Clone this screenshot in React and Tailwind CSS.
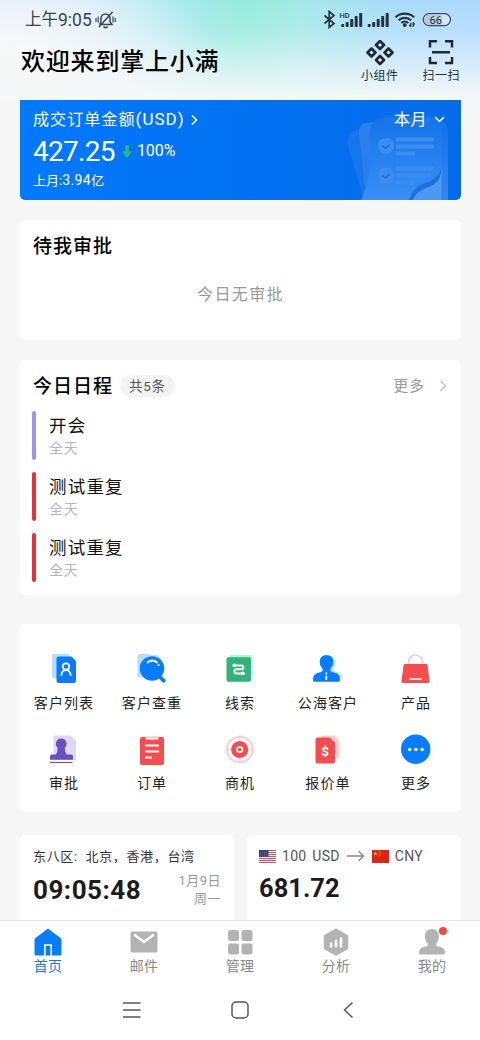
import React from "react";

const schedules = [
  { id: 1, title: "开会", time: "全天", color: "bg-[#9799ea]" },
  { id: 2, title: "测试重复", time: "全天", color: "bg-[#e2343a]" },
  { id: 3, title: "测试重复", time: "全天", color: "bg-[#e2343a]" },
];

const StatusIcons = () => (
  <svg width="130" height="20" viewBox="322 10 130 20" fill="none">
    {/* bluetooth */}
    <path
      d="M324.5 15.5 334 23.5 329.2 27.5V11.5L334 15.5 324.5 23.5"
      stroke="#26333b"
      strokeWidth="1.7"
    />
    <text x="339.5" y="17.5" fontSize="7.5" fontWeight="500" fill="#26333b">
      HD
    </text>
    {/* signal bars */}
    <g fill="#26333b">
      <rect x="341.2" y="24" width="3" height="3" rx=".8" />
      <rect x="345.7" y="22" width="3" height="5" rx=".8" />
      <rect x="350.2" y="19" width="3" height="8" rx=".8" />
      <rect x="354.7" y="16" width="3" height="11" rx=".8" />
      <rect x="359.2" y="13" width="3" height="14" rx=".8" />
      <rect x="367.7" y="24" width="3" height="3" rx=".8" />
      <rect x="372.2" y="22" width="3" height="5" rx=".8" />
      <rect x="376.7" y="19" width="3" height="8" rx=".8" />
      <rect x="381.2" y="16" width="3" height="11" rx=".8" />
      <rect x="385.7" y="13" width="3" height="14" rx=".8" />
      <circle cx="404.8" cy="25" r="1.9" />
      <path d="M411 22.5v4.5l-2-1.6M413 27v-4.5l2 1.6" stroke="#26333b" strokeWidth=".8" />
    </g>
    <g stroke="#26333b" strokeWidth="2.1">
      <path d="M395.5 17.2c5.2-4.8 13.4-4.8 18.6 0" />
      <path d="M398.5 20.3c3.5-3.2 9.1-3.2 12.600 0" />
      <path d="M401.3 23c2-1.800 5-1.800 7 0" />
    </g>
    <rect x="423.3" y="13.600" width="27.200" height="12" rx="6" fill="#d3e9fd" stroke="#3c4a55" strokeWidth="1.300" />
    <path d="M429.300 14.300h12.500v10.600h-12.500a5.300 5.300 0 0 1 0-10.600z" fill="#b3cbdf" />
    <text x="429.500" y="23.500" fontSize="11" fill="#26333b">
      66
    </text>
  </svg>
);

const MuteIcon = () => (
  <svg width="22" height="18" viewBox="0 0 22 18" fill="none" stroke="#3c464e" strokeWidth="1.500">
    <path d="M4.500 13.500h12.500l-1.900-2.500V7.500a4.600 4.600 0 0 0-9.200 0V11l-1.400 2.500M17.500 1 4 16" />
    <path d="M8.500 15.500a2.500 2.500 0 0 0 4.200 0" />
    <path d="M1 7v4M3.200 5.500v6M18 5.500v6M20.200 7v4" strokeWidth="1.200" />
  </svg>
);

const Header = () => (
  <header className="h-[100px] shrink-0 bg-[linear-gradient(to_bottom,transparent_0%,rgba(246,248,248,0.15)_30%,rgba(246,248,248,0.7)_75%,#f5f8f8_100%),radial-gradient(ellipse_235px_150px_at_0px_100px,#f7f9f9_35%,transparent_100%),linear-gradient(97deg,#dce9fd_0%,#cae9fb_22%,#9feae6_42%,#97ecdc_50%,#a3e9e8_62%,#a9dcfb_80%,#add9ff_100%)]">
    <div className="flex h-10 items-center justify-between pl-[25px] pr-7 text-[#39434a]">
      <div className="flex items-center text-[17.5px]">
        <span className="text-[16.5px]">上午</span>
        <span className="mr-[3px]">9:05</span>
        <MuteIcon />
      </div>
      <StatusIcons />
    </div>
    <div className="flex justify-between pl-[21px] pr-5">
      <h1 className="mt-1 text-[24px] leading-9 font-medium tracking-[0.8px] text-black">
        欢迎来到掌上小满
      </h1>
      <div className="flex gap-6 text-[12px] leading-4 tracking-[0.5px] text-[#263036]">
        <div className="flex flex-col items-center">
          <svg width="28" height="28" viewBox="0 0 28 28" fill="none" stroke="#20292d" strokeWidth="2.600" strokeLinejoin="round">
            <path d="m14 1 4 4-4 4-4-4zM5.500 8.500l4 4-4 4-4-4zM22.500 8.500l4 4-4 4-4-4zM14 16l4 4-4 4-4-4z" />
          </svg>
          <span>小组件</span>
        </div>
        <div className="flex flex-col items-center">
          <svg width="26" height="28" viewBox="0 0 26 28" fill="none" stroke="#20292d" strokeWidth="2.500">
            <path d="M2 7.500V1.300h7M17 1.300h7v6.200M24 17v6h-7M9 23H2v-6M4 12.200h18" />
          </svg>
          <span>扫一扫</span>
        </div>
      </div>
    </div>
  </header>
);

const OrderCard = () => (
  <section className="relative h-[100px] shrink-0 overflow-hidden rounded-b-[5px] bg-linear-to-r from-[#0379fc] via-[#0272f2] to-[#066bea] pt-2 pr-4 pl-[13px] text-white">
    <svg className="absolute right-0 bottom-0" width="120" height="100" viewBox="341 100 120 100">
      <defs>
        <linearGradient id="page" x1="0" y1="0" x2="0" y2="1">
          <stop offset="0" stopColor="#1374e9" />
          <stop offset="1" stopColor="#3a8ff5" />
        </linearGradient>
        <linearGradient id="edge" x1="0" y1="0" x2="0" y2="1">
          <stop offset="0" stopColor="#1172e8" />
          <stop offset="1" stopColor="#3388ee" />
        </linearGradient>
      </defs>
      <path d="M363 197 348 145q-2-9 4-13l12-5 20-3v76z" fill="#1677ec" />
      <path d="M364 186q-1-22-5-52-1-10 7-11l25-3v80z" fill="#2880ec" />
      <path d="M430 120h8q10 2 10 12v68h-14z" fill="url(#edge)" />
      <path d="M361 200q13-30 9-66 0-16 12-16h48q12 0 12 14v38q-4 18-25 25l-5 5z" fill="url(#page)" />
      <path d="M384 116h46v9h-46z" fill="#2c7ff0" opacity=".35" />
      <path d="M410 200q5-10 15-13 15-4 16.500-18v31z" fill="#4c99f2" />
      <path d="M409 200q4-13 14-16 14-4 18.500-15-1 15-15.500 19-9 3-13 12z" fill="#1a71df" />
      <g fill="#3c8df0">
        <circle cx="386" cy="146" r="8" />
        <circle cx="386" cy="175.500" r="8" />
        <rect x="396" y="137.500" width="38" height="4" />
        <rect x="396" y="144.500" width="38" height="4" />
        <rect x="396" y="151.500" width="19" height="4" />
        <rect x="396" y="166.500" width="38" height="4" />
        <rect x="396" y="173.500" width="35" height="4" />
        <rect x="396" y="180.500" width="19" height="4" />
      </g>
      <path d="m382.500 146 3 2.500 4-4M382.500 175.500l3 2.500 4-4" fill="none" stroke="#1668d4" strokeWidth="1.200" />
    </svg>
    <div className="relative flex h-[23px] items-center justify-between text-[16px]">
      <div className="flex items-center">
        <span className="tracking-[1.100px]">成交订单金额</span>
        <span className="text-[17px] tracking-[1px]">(USD)</span>
        <svg className="ml-1.5" width="7" height="12" viewBox="0 0 7 12" fill="none" stroke="#fff" strokeWidth="1.500">
          <path d="m1 1.500 4.500 4.500L1 10.500" />
        </svg>
      </div>
      <div className="flex items-center gap-[7px] tracking-[0.500px]">
        本月
        <svg width="11" height="7" viewBox="0 0 11 7" fill="none" stroke="#fff" strokeWidth="1.500">
          <path d="m1 1 4.500 4.500L10 1" />
        </svg>
      </div>
    </div>
    <div className="relative flex h-10 items-center">
      <span className="pt-0.5 text-[28px] tracking-[-0.700px]">427.25</span>
      <svg className="ml-[7px]" width="10" height="13" viewBox="0 0 10 13" fill="#2eb57e">
        <path d="M3.200 0h3.600v6.500H10L5 13 0 6.500h3.200z" />
      </svg>
      <span className="ml-[5px] text-[16px]">100%</span>
    </div>
    <div className="relative text-[13px] leading-[18px]">
      上月:<span className="text-[14px] tracking-[0.400px]">3.94</span>亿
    </div>
  </section>
);

const ScheduleCard = () => (
  <section className="mt-5 h-[235px] shrink-0 rounded-[5px] bg-white pt-3 pr-3 pl-3">
    <div className="flex h-7 items-center">
      <h2 className="mt-0.5 ml-px text-[19px] font-medium tracking-[1px] text-black">今日日程</h2>
      <span className="ml-[7px] flex h-[22px] items-center rounded-full bg-[#f3f3f3] px-[9px] text-[13.500px] tracking-[0.700px] text-[#555]">
        共5条
      </span>
      <span className="ml-auto text-[15px] tracking-[0.900px] text-[#999]">更多</span>
      <svg className="mr-[2px] ml-[14px]" width="8" height="12" viewBox="0 0 8 12" fill="none" stroke="#bbb" strokeWidth="1.200">
        <path d="m1.500 1 5 5-5 5" />
      </svg>
    </div>
    <div className="mt-[10.500px] flex flex-col gap-3">
      {schedules.map((item) => (
        <div key={item.id} className="flex h-[49px]">
          <div className={`w-1 rounded-full ${item.color}`}></div>
          <div className="ml-[13px] flex flex-col">
            <span className="mt-[3px] text-[17.500px] leading-6 tracking-[1.200px] text-[#111]">{item.title}</span>
            <span className="text-[14px] leading-5 tracking-[0.800px] text-[#b5b5b5]">{item.time}</span>
          </div>
        </div>
      ))}
    </div>
  </section>
);

const features = [
  {
    name: "客户列表",
    icon: (
      <>
        <path d="M5 0h15v24H5a2 2 0 0 1-2-2V2a2 2 0 0 1 2-2z" fill="#b9ddfd" />
        <path d="M9.500 2.500h13L27 7v20a2 2 0 0 1-2 2H9.500a2 2 0 0 1-2-2V4.500a2 2 0 0 1 2-2z" fill="#087dfb" />
        <g fill="none" stroke="#fff" strokeWidth="1.800">
          <circle cx="17" cy="12.500" r="3.200" />
          <path d="M12.300 22c0-8 9.400-8 9.400 0" />
        </g>
      </>
    ),
  },
  {
    name: "客户查重",
    icon: (
      <>
        <path d="M2.500 0h10v23h-12V2a2 2 0 0 1 2-2z" fill="#b9ddfd" />
        <path d="M12 1h8l5 5v4H12z" fill="#b9ddfd" />
        <path d="m21 21 5.700 5.700" stroke="#087dfb" strokeWidth="3.800" strokeLinecap="round" />
        <circle cx="15" cy="14.500" r="12.200" fill="#087dfb" />
        <path d="M10.500 8.500q5-4 9.500 0" fill="none" stroke="#fff" strokeWidth="1.800" strokeLinecap="round" />
        <circle cx="21.500" cy="11" r="1" fill="#fff" />
      </>
    ),
  },
  {
    name: "线索",
    icon: (
      <>
        <rect x="4.500" y="1" width="23" height="23" rx="2" fill="#b5efd6" />
        <rect x="1.500" y="3.300" width="24.500" height="24.500" rx="2" fill="#31b37c" />
        <path d="M9 11.500h7.500a1.900 1.900 0 0 1 0 3.800h-5a2 2 0 0 0 0 4.200H18" fill="none" stroke="#fff" strokeWidth="1.900" />
        <circle cx="9.300" cy="11.300" r="1.900" fill="#fff" />
        <circle cx="18" cy="19.300" r="1.900" fill="#fff" />
      </>
    ),
  },
  {
    name: "公海客户",
    icon: (
      <>
        <path d="M12 2q10-2 10.500 7 0 4-2.500 6 0 2 4 3 5 1 4.500 6H14z" fill="#b9ddfd" />
        <path d="M13.500 1c8 0 8.500 9.500 3.700 14 0 2 .3 2.700 3.800 3.500 4.500 1.200 6 3.500 6 7.500 0 1.200-.5 1.700-1.500 1.700h-24C.5 27.700 0 27.200 0 26c0-4 1.500-6.300 6-7.500 3.500-.8 3.800-1.500 3.800-3.500C5 10.500 5.500 1 13.500 1z" fill="#087dfb" />
        <path d="M13.300 18.500v1.700M13.300 21.500v4.500" stroke="#fff" strokeWidth="1.800" />
      </>
    ),
  },
  {
    name: "产品",
    icon: (
      <>
        <path d="M7.500 12V8a7 7 0 0 1 14 0v4" fill="none" stroke="#fbc9c9" strokeWidth="1.700" />
        <path d="M4 10h21a1.500 1.500 0 0 1 1.500 1.300l2 16a1.500 1.500 0 0 1-1.500 1.700H2A1.500 1.500 0 0 1 .5 27.300l2-16A1.500 1.500 0 0 1 4 10z" fill="#f54c50" />
        <path d="M8 25h13" stroke="#fff" strokeWidth="1.700" />
      </>
    ),
  },
  {
    name: "审批",
    icon: (
      <>
        <path d="M6.500 1.500h15L27 7v19H4.500V3.500a2 2 0 0 1 2-2z" fill="#dfd6fb" />
        <path d="M12.300 4.500a5.300 5.300 0 0 1 3.800 9q-.8 4 1.400 7H22q2 0 2 2v3.300H1v-3.300q0-2 2-2h4q2.200-3 1.400-7a5.300 5.300 0 0 1 3.900-9z" fill="#6a50bd" />
        <path d="M1 28.500h22.500" stroke="#6a50bd" strokeWidth="1.200" />
      </>
    ),
  },
  {
    name: "订单",
    icon: (
      <>
        <rect x="3" y="3" width="24" height="28" rx="2" fill="#f54c50" />
        <path d="M8.500 2h13v2.500A1.500 1.500 0 0 1 20 6H10a1.500 1.500 0 0 1-1.500-1.500z" fill="#fbd3d3" />
        <path d="M8 11.500h14M8 17.500h14M8 23.500h7" stroke="#fff" strokeWidth="1.800" />
      </>
    ),
  },
  {
    name: "商机",
    icon: (
      <>
        <circle cx="14.700" cy="15.500" r="12.800" fill="none" stroke="#fbcfcd" strokeWidth="2" />
        <path d="M14.700 1.500v5M14.700 24.500v5M.7 15.500h5M23.700 15.500h5" stroke="#fbcfcd" strokeWidth="1.400" />
        <circle cx="14.700" cy="15.500" r="8.600" fill="#f54c50" />
        <circle cx="14.700" cy="15.500" r="2.700" fill="none" stroke="#fff" strokeWidth="1.700" />
      </>
    ),
  },
  {
    name: "报价单",
    icon: (
      <>
        <path d="M8.500 1.500h13L26.300 6v18H8.500z" fill="#fbcfcd" />
        <path d="M4.500 3.500h12l5.500 5v19a2 2 0 0 1-2 2H4.500a2 2 0 0 1-2-2v-22a2 2 0 0 1 2-2z" fill="#f54c50" />
        <text x="12.200" y="21.500" textAnchor="middle" fontSize="13.500" fontWeight="700" fill="#fff">
          $
        </text>
      </>
    ),
  },
  {
    name: "更多",
    icon: (
      <>
        <circle cx="14.700" cy="15.200" r="14.700" fill="#087dfb" />
        <circle cx="8.700" cy="15.500" r="1.700" fill="#fff" />
        <circle cx="14.900" cy="15.500" r="1.700" fill="#fff" />
        <circle cx="21.100" cy="15.500" r="1.700" fill="#fff" />
      </>
    ),
  },
];

const FeatureGrid = () => (
  <section className="mt-[29px] grid h-[188px] shrink-0 grid-cols-5 content-start gap-y-[23px] rounded-[5px] bg-white pt-[30px] pr-px">
    {features.map((item) => (
      <div key={item.name} className="flex h-[57px] flex-col items-center">
        <svg className="overflow-visible" width="30" height="30" viewBox="0 0 30 30">
          {item.icon}
        </svg>
        <span className="mt-[9px] text-[14px] leading-5 tracking-[1.100px] whitespace-nowrap text-[#222]">{item.name}</span>
      </div>
    ))}
  </section>
);

const UsFlag = () => (
  <svg width="17" height="13" viewBox="0 0 17 13">
    <path d="M0 0h17v13H0z" fill="#f1e4e6" />
    <path d="M0 .5h17M0 2.500h17M0 4.500h17M0 6.500h17M0 8.500h17M0 10.500h17M0 12.500h17" stroke="#c75a66" />
    <path d="M0 0h9.500v7H0z" fill="#2f4270" />
    <path d="M1 2h8M1 4h8M1 6h8" stroke="#8291b5" strokeWidth=".7" strokeDasharray="1 1" />
  </svg>
);

const CnFlag = () => (
  <svg width="17" height="13" viewBox="0 0 17 13">
    <path d="M0 0h17v13H0z" fill="#dd2417" />
    <path d="m3.500 1.500.6 1.500h1.600L4.400 4l.5 1.600-1.400-1L2.100 5.600 2.600 4 1.300 3h1.600z" fill="#fbd52c" />
    <path d="M6.500 1h1M7.700 2.500h1M7.700 4.300h1M6.500 5.800h1" stroke="#f5b62a" />
  </svg>
);

const InfoCards = () => (
  <div className="mt-[23px] flex min-h-0 flex-1 gap-[13px]">
    <section className="w-[214px] rounded-t-[5px] bg-white pt-3 pr-[13px] pl-[13px]">
      <div className="text-[13px] leading-5 tracking-[0.650px] whitespace-pre text-[#333]">
        {"东八区:  北京，香港，台湾"}
      </div>
      <div className="mt-[3px] flex justify-between">
        <span className="text-[26px] leading-10 font-bold tracking-[0.500px] text-[#1c1c1e]">09:05:48</span>
        <div className="mt-0.5 text-right text-[13px] leading-[18px] tracking-[0.500px] text-[#999]">
          <div>1月9日</div>
          <div>周一</div>
        </div>
      </div>
    </section>
    <section className="flex-1 rounded-t-[5px] bg-white pt-[11px] pl-3">
      <div className="flex h-5 items-center text-[14px] tracking-[0.300px] text-[#555]">
        <UsFlag />
        <span className="ml-[6px] [word-spacing:2px]">100 USD</span>
        <svg className="ml-[7px]" width="18" height="12" viewBox="0 0 18 12" fill="none" stroke="#888" strokeWidth="1.300">
          <path d="M0 6h16.500M11.500 1l5 5-5 5" />
        </svg>
        <span className="ml-[7px]">
          <CnFlag />
        </span>
        <span className="ml-[6px]">CNY</span>
      </div>
      <div className="mt-0.5 text-[25.500px] leading-10 font-bold text-[#1c1c1e]">681.72</div>
    </section>
  </div>
);

const tabs = [
  {
    name: "首页",
    active: true,
    icon: (
      <>
        <path d="M14 .5 26.500 10q1 .8 1 2v14q0 1.500-1.500 1.500H2q-1.500 0-1.500-1.500V12q0-1.200 1-2z" fill="#087dfb" />
        <path d="M10.800 28V17h6.400v11" fill="none" stroke="#fff" strokeWidth="1.500" />
      </>
    ),
  },
  {
    name: "邮件",
    icon: (
      <>
        <rect x=".5" y="3.500" width="27" height="21" rx="1.500" fill="#b3b3b3" />
        <path d="m4 6.500 10 7.500 10-7.500" fill="none" stroke="#fff" strokeWidth="2.200" />
      </>
    ),
  },
  {
    name: "管理",
    icon: (
      <g fill="#b3b3b3">
        <rect x="2" y="2" width="11" height="11" rx="2.500" />
        <rect x="15.500" y="2" width="11" height="11" rx="2.500" />
        <rect x="2" y="15.500" width="11" height="11" rx="2.500" />
        <rect x="15.500" y="15.500" width="11" height="11" rx="2.500" />
      </g>
    ),
  },
  {
    name: "分析",
    icon: (
      <>
        <path d="M14 1.800 25 8v12.500L14 26.500 3 20.500V8z" fill="#b3b3b3" stroke="#b3b3b3" strokeWidth="2.500" strokeLinejoin="round" />
        <path d="M9 15.500v3M14 13v5.500M19 10.500v8" stroke="#fff" strokeWidth="2.600" strokeLinecap="round" />
      </>
    ),
  },
  {
    name: "我的",
    badge: true,
    icon: (
      <path d="M14 1c8 0 9 9.500 4 15 0 2 1 2.500 4 3 4 .8 5 3 5 6q0 1.500-1.500 1.500h-23Q1 26.500 1 25c0-3 1-5.200 5-6 3-.5 4-1 4-3C5 10.500 6 1 14 1z" fill="#b3b3b3" />
    ),
  },
];

const TabBar = () => (
  <nav className="grid h-[61px] shrink-0 grid-cols-5 border-t border-[#e8e8e8] bg-white pt-[7px]">
    {tabs.map((tab) => (
      <div key={tab.name} className="flex flex-col items-center">
        <div className="relative">
          <svg width="28" height="28" viewBox="0 0 28 28">
            {tab.icon}
          </svg>
          {tab.badge && <span className="absolute -top-px -right-px size-2 rounded-full bg-[#ee4b47]"></span>}
        </div>
        <span className={`text-[14px] leading-[21px] tracking-[0.300px] ${tab.active ? "text-[#187ad4]" : "text-[#888]"}`}>
          {tab.name}
        </span>
      </div>
    ))}
  </nav>
);

const SystemBar = () => (
  <div className="flex h-[59px] shrink-0 items-center justify-center gap-[90px] bg-white pb-0.5">
    <svg width="18" height="18" viewBox="0 0 18 18" fill="none" stroke="#555" strokeWidth="1.500">
      <path d="M0 2h17.500M0 9h17.500M0 16h17.500" />
    </svg>
    <svg width="18" height="18" viewBox="0 0 18 18" fill="none" stroke="#555" strokeWidth="1.500">
      <rect x="1" y="1" width="16" height="16" rx="4" />
    </svg>
    <svg width="18" height="18" viewBox="0 0 18 18" fill="none" stroke="#555" strokeWidth="1.500">
      <path d="M13.500 1.500 5.500 9l8 7.500" />
    </svg>
  </div>
);

const App = () => {
  return (
    <div className="flex h-[1040px] w-[480px] flex-col overflow-hidden bg-[#f6f6f6] font-[Roboto,'Noto_Sans_CJK_SC',sans-serif]">
      <Header />
      <main className="flex min-h-0 flex-1 flex-col overflow-hidden pr-[19px] pl-5">
        <OrderCard />
        <section className="mt-5 h-[120px] shrink-0 rounded-[5px] bg-white px-[13px] pt-[13px]">
          <h2 className="text-[19px] leading-7 font-medium tracking-[1px] text-black">待我审批</h2>
          <p className="mt-[22px] text-center text-[16px] leading-6 tracking-[1.400px] text-[#999]">今日无审批</p>
        </section>
        <ScheduleCard />
        <FeatureGrid />
        <InfoCards />
      </main>
      <TabBar />
      <SystemBar />
    </div>
  );
};

export default App;
